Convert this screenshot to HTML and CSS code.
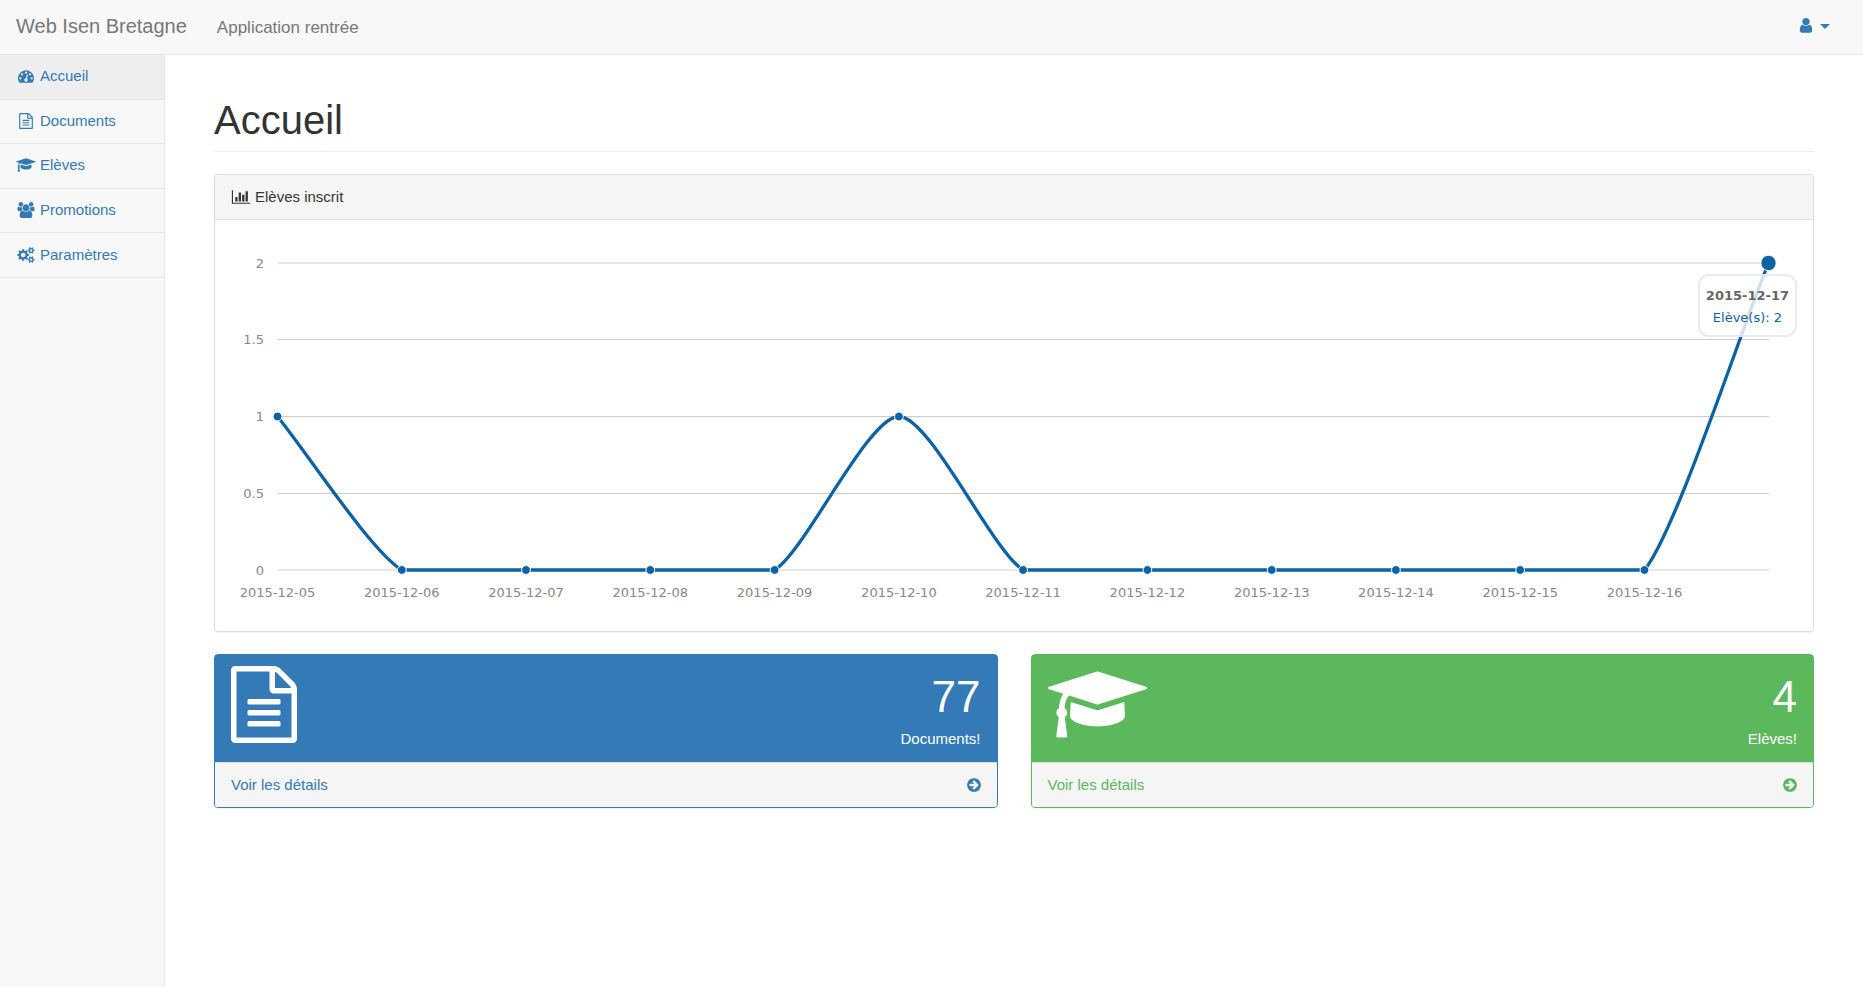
FILE: index.html
```html
<!DOCTYPE html>
<html lang="fr">
<head>
<meta charset="utf-8">
<meta name="viewport" content="width=device-width, initial-scale=1">
<title>Web Isen Bretagne</title>
<link rel="stylesheet" href="styles.css">
</head>
<body>
<svg class="sprite" aria-hidden="true">
  <symbol id="i-file" viewBox="0 0 1536 1792"><path d="M1468 380q28 28 48 76t20 88v1152q0 40-28 68t-68 28h-1344q-40 0-68-28t-28-68v-1600q0-40 28-68t68-28h896q40 0 88 20t76 48zm-444-244v376h376q-10-29-22-41l-313-313q-12-12-41-22zm384 1528v-1024h-416q-40 0-68-28t-28-68v-416h-768v1536h1280zm-1024-864q0-14 9-23t23-9h704q14 0 23 9t9 23v64q0 14-9 23t-23 9h-704q-14 0-23-9t-9-23v-64zm736 224q14 0 23 9t9 23v64q0 14-9 23t-23 9h-704q-14 0-23-9t-9-23v-64q0-14 9-23t23-9h704zm0 256q14 0 23 9t9 23v64q0 14-9 23t-23 9h-704q-14 0-23-9t-9-23v-64q0-14 9-23t23-9h704z"/></symbol>
  <symbol id="i-cap" viewBox="0 0 2304 1792"><path d="M1774 836l18 316q4 69-82 128t-235 93.500-323 34.500-323-34.500-235-93.500-82-128l18-316 574 181q22 7 48 7t48-7zm530-324q0 23-22 31l-1120 352q-4 1-10 1t-10-1l-652-206q-43 34-71 111.500t-34 178.500q63 36 63 109 0 69-58 107l58 433q2 14-8 25-9 11-24 11h-192q-15 0-24-11-10-11-8-25l58-433q-58-38-58-107 0-73 65-111 11-207 98-330l-333-104q-22-8-22-31t22-31l1120-352q4-1 10-1t10 1l1120 352q22 8 22 31z"/></symbol>
  <symbol id="i-dash" viewBox="0 0 1792 1792"><path d="M384 1152q0-53-37.500-90.500t-90.500-37.500-90.500 37.500-37.500 90.500 37.500 90.500 90.500 37.500 90.500-37.500 37.500-90.500zm192-448q0-53-37.500-90.500t-90.500-37.500-90.500 37.500-37.500 90.500 37.500 90.500 90.500 37.500 90.500-37.500 37.500-90.500zm428 481l101-382q6-26-7.500-48.500t-38.500-29.500-48 6.500-30 39.500l-101 382q-60 5-107 43.500t-63 98.500q-20 77 20 146t117 89 146-20 89-117q16-60-6-117t-72-91zm660-33q0-53-37.500-90.500t-90.500-37.500-90.500 37.500-37.500 90.500 37.500 90.500 90.500 37.500 90.500-37.500 37.500-90.500zm-640-640q0-53-37.500-90.500t-90.500-37.500-90.500 37.500-37.500 90.500 37.500 90.500 90.500 37.500 90.500-37.500 37.500-90.500zm448 192q0-53-37.500-90.500t-90.500-37.500-90.500 37.500-37.500 90.500 37.500 90.500 90.500 37.500 90.500-37.500 37.500-90.500zm320 448q0 261-141 483-19 29-54 29h-1402q-35 0-54-29-141-221-141-483 0-182 71-348t191-286 286-191 348-71 348 71 286 191 191 286 71 348z"/></symbol>
  <symbol id="i-chart" viewBox="0 0 2048 1792"><path d="M640 896v512h-256v-512h256zm384-512v1024h-256v-1024h256zm1024 1152v128h-2048v-1536h128v1408h1920zm-640-896v768h-256v-768h256zm384-384v1152h-256v-1152h256z"/></symbol>
  <symbol id="i-arrow" viewBox="128 0 1536 1792"><path d="M1413 896q0-27-18-45l-91-91-362-362q-18-18-45-18t-45 18l-91 91q-18 18-18 45t18 45l189 189h-502q-26 0-45 19t-19 45v128q0 26 19 45t45 19h502l-189 189q-19 19-19 45t19 45l91 91q18 18 45 18t45-18l362-362 91-91q18-18 18-45zm251 0q0 209-103 385.500t-279.500 279.500-385.500 103-385.500-103-279.500-279.500-103-385.500 103-385.500 279.500-279.500 385.500-103 385.500 103 279.500 279.500 103 385.500z"/></symbol>
  <symbol id="i-user" viewBox="64 128 1664 1664"><path d="M1536 1399q0 109-62.500 187t-150.500 78h-854q-88 0-150.500-78t-62.500-187q0-85 8.500-160.500t31.500-152 58.500-131 94-89 134.500-34.500q131 128 313 128t313-128q76 0 134.500 34.500t94 89 58.500 131 31.500 152 8.500 160.500zm-256-887q0 159-112.500 271.500t-271.500 112.500-271.500-112.500-112.500-271.500 112.500-271.500 271.500-112.500 271.500 112.500 112.500 271.500z"/></symbol>
  <symbol id="i-users" viewBox="0 0 1920 1792"><path d="M593 896q-162 5-265 128h-134q-82 0-138-40.500t-56-118.500q0-353 124-353 6 0 43.500 21t97.500 42.500 119 21.500q67 0 133-23-5 37-5 66 0 139 81 256zm1071 637q0 120-73 189.500t-194 69.500h-874q-121 0-194-69.500t-73-189.500q0-53 3.500-103.500t14-109 26.500-108.500 43-97.500 62-81 85.500-53.500 111.500-20q10 0 43 21.500t73 48 107 48 135 21.500 135-21.500 107-48 73-48 43-21.500q61 0 111.500 20t85.500 53.500 62 81 43 97.500 26.500 108.500 14 109 3.500 103.500zm-1024-1277q0 106-75 181t-181 75-181-75-75-181 75-181 181-75 181 75 75 181zm704 384q0 159-112.500 271.500t-271.500 112.500-271.500-112.500-112.500-271.500 112.500-271.500 271.500-112.500 271.500 112.500 112.500 271.500zm576 225q0 78-56 118.500t-138 40.500h-134q-103-123-265-128 81-117 81-256 0-29-5-66 66 23 133 23 59 0 119-21.500t97.500-42.500 43.500-21q124 0 124 353zm-128-609q0 106-75 181t-181 75-181-75-75-181 75-181 181-75 181 75 75 181z"/></symbol>
  <symbol id="i-cogs" viewBox="0 0 1920 1792"><path d="M896 896q0-106-75-181t-181-75-181 75-75 181 75 181 181 75 181-75 75-181zm768 512q0-52-38-90t-90-38-90 38-38 90q0 53 37.500 90.500t90.500 37.500 90.500-37.500 37.500-90.500zm0-1024q0-52-38-90t-90-38-90 38-38 90q0 53 37.500 90.500t90.500 37.500 90.500-37.500 37.500-90.500zm-384 421v185q0 10-7 19.500t-16 10.500l-155 24q-11 35-32 76 34 48 90 115 7 10 7 20 0 12-7 19-23 30-82.500 89.500t-78.500 59.500q-11 0-21-7l-115-90q-37 19-77 31-11 108-23 155-7 24-30 24h-186q-11 0-20-7.500t-10-17.500l-23-153q-34-10-75-31l-118 89q-7 7-20 7-11 0-21-8-144-133-144-160 0-9 7-19 10-14 41-53t47-61q-23-44-35-82l-152-24q-10-1-17-9.500t-7-19.500v-185q0-10 7-19.500t16-10.500l155-24q11-35 32-76-34-48-90-115-7-11-7-20 0-12 7-20 22-30 82-89t79-59q11 0 21 7l115 90q34-18 77-32 11-108 23-154 7-24 30-24h186q11 0 20 7.500t10 17.500l23 153q34 10 75 31l118-89q8-7 20-7 11 0 21 8 144 133 144 160 0 9-7 19-12 16-42 54t-45 60q23 48 34 82l152 23q10 2 17 10.500t7 19.500zm640 533v140q0 16-149 31-12 27-30 52 51 113 51 138 0 4-4 7-122 71-124 71-8 0-46-47t-52-68q-20 2-30 2t-30-2q-14 21-52 68t-46 47q-2 0-124-71-4-3-4-7 0-25 51-138-18-25-30-52-149-15-149-31v-140q0-16 149-31 13-29 30-52-51-113-51-138 0-4 4-7 4-2 35-20t59-34 30-16q8 0 46 46.500t52 67.500q20-2 30-2t30 2q51-71 92-112l6-2q4 0 124 70 4 3 4 7 0 25-51 138 17 23 30 52 149 15 149 31zm0-1024v140q0 16-149 31-12 27-30 52 51 113 51 138 0 4-4 7-122 71-124 71-8 0-46-47t-52-68q-20 2-30 2t-30-2q-14 21-52 68t-46 47q-2 0-124-71-4-3-4-7 0-25 51-138-18-25-30-52-149-15-149-31v-140q0-16 149-31 13-29 30-52-51-113-51-138 0-4 4-7 4-2 35-20t59-34 30-16q8 0 46 46.500t52 67.500q20-2 30-2t30 2q51-71 92-112l6-2q4 0 124 70 4 3 4 7 0 25-51 138 17 23 30 52 149 15 149 31z"/></symbol>
</svg>

<header class="navbar">
  <a class="brand" href="#">Web Isen Bretagne</a>
  <p class="app-name">Application rentrée</p>
  <button class="user-menu" type="button" aria-label="Menu utilisateur">
    <svg class="icon"><use href="#i-user"/></svg>
    <span class="caret"></span>
  </button>
</header>

<div class="layout">
  <nav class="sidebar">
    <ul class="menu">
      <li><a class="menu-link active" href="#"><svg class="icon icon-fw"><use href="#i-dash"/></svg>Accueil</a></li>
      <li><a class="menu-link" href="#"><svg class="icon icon-fw"><use href="#i-file"/></svg>Documents</a></li>
      <li><a class="menu-link" href="#"><svg class="icon icon-fw"><use href="#i-cap"/></svg>Elèves</a></li>
      <li><a class="menu-link" href="#"><svg class="icon icon-fw"><use href="#i-users"/></svg>Promotions</a></li>
      <li><a class="menu-link" href="#"><svg class="icon icon-fw"><use href="#i-cogs"/></svg>Paramètres</a></li>
    </ul>
  </nav>

  <main class="content">
    <h1 class="page-header">Accueil</h1>

    <section class="panel">
      <div class="panel-heading"><svg class="icon icon-fw"><use href="#i-chart"/></svg>Elèves inscrit</div>
      <div class="panel-body">
        <div class="chart">
          <svg class="chart-svg" viewBox="0 0 1566 379" role="img" aria-label="Elèves inscrit par jour">
            <g class="grid-text grid-y">
              <text x="33" y="31.500">2</text>
              <text x="33" y="108">1.5</text>
              <text x="33" y="185">1</text>
              <text x="33" y="262">0.5</text>
              <text x="33" y="338.500">0</text>
            </g>
            <g class="grid-lines">
              <path d="M46.500 103.500H1537.500M46.500 180.500H1537.500M46.500 257.500H1537.500"/>
              <path class="edge" d="M46.500 27H1537.500M46.500 334H1537.500"/>
            </g>
            <g class="grid-text grid-x">
              <text x="46.500" y="361">2015-12-05</text>
              <text x="170.800" y="361">2015-12-06</text>
              <text x="295" y="361">2015-12-07</text>
              <text x="419.300" y="361">2015-12-08</text>
              <text x="543.600" y="361">2015-12-09</text>
              <text x="667.900" y="361">2015-12-10</text>
              <text x="792.100" y="361">2015-12-11</text>
              <text x="916.400" y="361">2015-12-12</text>
              <text x="1040.700" y="361">2015-12-13</text>
              <text x="1164.900" y="361">2015-12-14</text>
              <text x="1289.200" y="361">2015-12-15</text>
              <text x="1413.500" y="361">2015-12-16</text>
            </g>
            <path class="series" stroke-width="3.300" d="M46.500 180.500C77.600 218.900 139.700 314.800 170.800 334H543.600C574.700 314.800 636.800 180.500 667.900 180.500C699 180.500 761 314.800 792.100 334H1413.500C1444.500 295.600 1506.600 103.700 1537.500 27"/>
            <g class="points">
              <circle cx="46.500" cy="180.500" r="4.400"/>
              <circle cx="170.800" cy="334" r="4.400"/>
              <circle cx="295" cy="334" r="4.400"/>
              <circle cx="419.300" cy="334" r="4.400"/>
              <circle cx="543.600" cy="334" r="4.400"/>
              <circle cx="667.900" cy="180.500" r="4.400"/>
              <circle cx="792.100" cy="334" r="4.400"/>
              <circle cx="916.400" cy="334" r="4.400"/>
              <circle cx="1040.700" cy="334" r="4.400"/>
              <circle cx="1164.900" cy="334" r="4.400"/>
              <circle cx="1289.200" cy="334" r="4.400"/>
              <circle cx="1413.500" cy="334" r="4.400"/>
              <circle cx="1537.500" cy="27" r="7.700"/>
            </g>
          </svg>
          <div class="tooltip">
            <strong class="tooltip-title">2015-12-17</strong>
            <span class="tooltip-value">Elève(s): 2</span>
          </div>
        </div>
      </div>
    </section>

    <div class="cards">
      <section class="card card-blue">
        <div class="card-head">
          <svg class="card-icon"><use href="#i-file"/></svg>
          <div class="card-figures">
            <div class="huge">77</div>
            <div>Documents!</div>
          </div>
        </div>
        <a class="card-foot" href="#"><span>Voir les détails</span><svg class="icon icon-arrow"><use href="#i-arrow"/></svg></a>
      </section>
      <section class="card card-green">
        <div class="card-head">
          <svg class="card-icon card-icon-wide"><use href="#i-cap"/></svg>
          <div class="card-figures">
            <div class="huge">4</div>
            <div>Elèves!</div>
          </div>
        </div>
        <a class="card-foot" href="#"><span>Voir les détails</span><svg class="icon icon-arrow"><use href="#i-arrow"/></svg></a>
      </section>
    </div>
  </main>
</div>
</body>
</html>
```
FILE: styles.css
```css
* {
  box-sizing: border-box;
}

body {
  margin: 0;
  min-height: 100vh;
  display: flex;
  flex-direction: column;
  background: #f8f8f8;
  color: #333;
  font-family: "Liberation Sans", Arial, sans-serif;
  font-size: 15px;
  line-height: 22px;
}

a {
  color: #337ab7;
  text-decoration: none;
}

.sprite {
  position: absolute;
  width: 0;
  height: 0;
}

.icon {
  width: 16px;
  height: 16px;
  flex: none;
  fill: currentColor;
}

.icon-fw {
  width: 20px;
  margin-right: 4px;
}

.icon-arrow {
  width: 14px;
}

/* Top bar */
.navbar {
  display: flex;
  align-items: center;
  height: 55px;
  padding: 0 33px 2px 16px;
  border-bottom: 1px solid #e7e7e7;
}

.brand {
  color: #777;
  font-size: 20px;
}

.app-name {
  margin: 3px 0 0 30px;
  color: #777;
  font-size: 17px;
}

.user-menu {
  display: flex;
  align-items: center;
  gap: 6px;
  margin-left: auto;
  padding: 0;
  border: 0;
  background: none;
  color: #337ab7;
}

.caret {
  border: 5px solid transparent;
  border-top-color: currentColor;
  border-bottom: 0;
}

/* Sidebar and page */
.layout {
  flex: 1;
  display: flex;
}

.sidebar {
  width: 164px;
  flex: none;
}

.menu {
  display: grid;
  grid-auto-rows: 1fr;
  height: 223px;
  margin: 0;
  padding: 0;
  list-style: none;
}

.menu-link {
  display: flex;
  align-items: center;
  height: 100%;
  padding: 0 16px 1px;
  border-bottom: 1px solid #e7e7e7;
}

.menu-link.active {
  background: #eee;
}

.content {
  flex: 1;
  min-width: 0;
  padding: 43px 49px 33px;
  border-left: 1px solid #e7e7e7;
  background: #fff;
}

.page-header {
  margin: 0 0 22px;
  padding-bottom: 9px;
  border-bottom: 1px solid #eee;
  font-size: 40px;
  font-weight: 400;
  line-height: 44px;
}

/* Chart panel */
.panel {
  margin-bottom: 22px;
  border: 1px solid #ddd;
  border-radius: 4px;
  box-shadow: 0 1px 1px rgba(0, 0, 0, 0.05);
}

.panel-heading {
  display: flex;
  align-items: center;
  padding: 11px 16px;
  border-bottom: 1px solid #ddd;
  border-radius: 3px 3px 0 0;
  background: #f5f5f5;
}

.panel-body {
  padding: 16px;
}

.chart {
  position: relative;
}

.chart-svg {
  display: block;
  width: 100%;
}

.grid-text {
  fill: #888;
  font-family: "DejaVu Sans", sans-serif;
  font-size: 13px;
}

.grid-y {
  text-anchor: end;
}

.grid-x {
  text-anchor: middle;
}

.grid-lines {
  fill: none;
  stroke: #ccc;
  stroke-width: 1;
  shape-rendering: crispEdges;
}

.grid-lines .edge {
  stroke: #e7e7e7;
  stroke-width: 2;
}

.series {
  fill: none;
  stroke: #0b62a4;
}

.points {
  fill: #0b62a4;
  stroke: #fff;
  stroke-width: 1;
}

.tooltip {
  position: absolute;
  top: 38px;
  right: 0;
  display: flex;
  flex-direction: column;
  padding: 9px 6px 6px;
  border: 2px solid rgba(230, 230, 230, 0.8);
  border-radius: 11px;
  background: rgba(255, 255, 255, 0.8);
  font-family: "DejaVu Sans", sans-serif;
  font-size: 13px;
  text-align: center;
}

.tooltip-title {
  color: #666;
}

.tooltip-value {
  color: #0b62a4;
}

/* Summary cards */
.cards {
  display: grid;
  grid-template-columns: 1fr 1fr;
  gap: 33px;
}

.card {
  border: 1px solid var(--tone);
  border-radius: 4px;
  box-shadow: 0 1px 1px rgba(0, 0, 0, 0.05);
}

.card-blue {
  --tone: #337ab7;
}

.card-green {
  --tone: #5cb85c;
}

.card-head {
  display: flex;
  justify-content: space-between;
  padding: 11px 16px 12px;
  background: var(--tone);
  color: #fff;
}

.card-icon {
  width: 66px;
  height: 77px;
  fill: currentColor;
}

.card-icon-wide {
  width: 99px;
}

.card-figures {
  text-align: right;
}

.huge {
  font-size: 44px;
  line-height: 62px;
}

.card-foot {
  display: flex;
  align-items: center;
  justify-content: space-between;
  padding: 11px 16px;
  border-top: 1px solid #ddd;
  border-radius: 0 0 3px 3px;
  background: #f5f5f5;
  color: var(--tone);
}
```
